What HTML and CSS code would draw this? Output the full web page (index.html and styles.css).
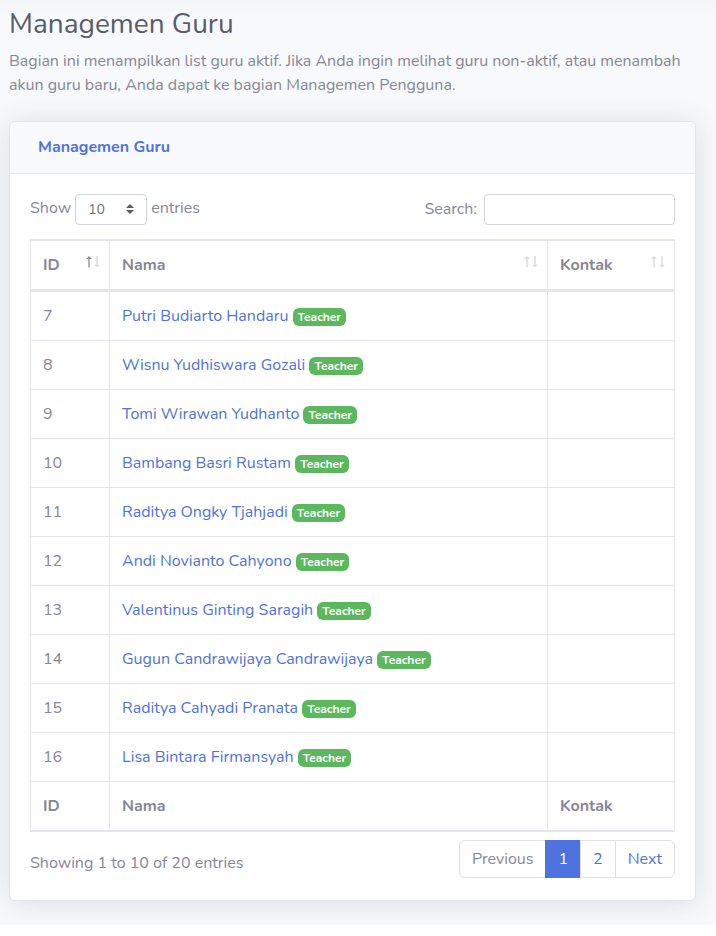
FILE: index.html
```html
<!DOCTYPE html>
<html lang="id">
<head>
<meta charset="utf-8">
<meta name="viewport" content="width=device-width, initial-scale=1">
<title>Managemen Guru</title>
<link rel="stylesheet" href="styles.css">
</head>
<body>
<main class="content">
  <h1 class="page-title">Managemen Guru</h1>
  <p class="intro">Bagian ini menampilkan list guru aktif. Jika Anda ingin melihat guru non-aktif, atau menambah akun guru baru, Anda dapat ke bagian Managemen Pengguna.</p>
  <section class="card">
    <header class="card-header"><h2 class="card-title">Managemen Guru</h2></header>
    <div class="card-body">
      <div class="toolbar">
        <div class="length">
          <label for="length">Show</label>
          <span class="select-wrap">
            <select id="length" class="control select"><option>10</option><option>25</option><option>50</option><option>100</option></select>
            <svg class="caret" viewBox="0 0 8 10" aria-hidden="true"><path d="M4 0 0 4h8zM4 10 0 6h8z"/></svg>
          </span>
          <span>entries</span>
        </div>
        <div class="search">
          <label for="search">Search:</label>
          <input id="search" type="search" class="control search-input">
        </div>
      </div>
      <table class="table">
        <colgroup><col class="col-id"><col><col class="col-kontak"></colgroup>
        <thead>
          <tr>
            <th><div class="sort asc">ID<svg class="arrows" viewBox="0 0 14 12" aria-hidden="true"><path class="up" d="M3 0 6 3H3.700V11.500H2.300V3H0z"/><path class="down" d="M11 11.500 8 8.800h2.300V0h1.400v8.800H14z"/></svg></div></th>
            <th><div class="sort">Nama<svg class="arrows" viewBox="0 0 14 12" aria-hidden="true"><path class="up" d="M3 0 6 3H3.700V11.500H2.300V3H0z"/><path class="down" d="M11 11.500 8 8.800h2.300V0h1.400v8.800H14z"/></svg></div></th>
            <th><div class="sort">Kontak<svg class="arrows" viewBox="0 0 14 12" aria-hidden="true"><path class="up" d="M3 0 6 3H3.700V11.500H2.300V3H0z"/><path class="down" d="M11 11.500 8 8.800h2.300V0h1.400v8.800H14z"/></svg></div></th>
          </tr>
        </thead>
        <tbody>
          <tr><td>7</td><td><a href="#">Putri Budiarto Handaru</a> <span class="badge">Teacher</span></td><td></td></tr>
          <tr><td>8</td><td><a href="#">Wisnu Yudhiswara Gozali</a> <span class="badge">Teacher</span></td><td></td></tr>
          <tr><td>9</td><td><a href="#">Tomi Wirawan Yudhanto</a> <span class="badge">Teacher</span></td><td></td></tr>
          <tr><td>10</td><td><a href="#">Bambang Basri Rustam</a> <span class="badge">Teacher</span></td><td></td></tr>
          <tr><td>11</td><td><a href="#">Raditya Ongky Tjahjadi</a> <span class="badge">Teacher</span></td><td></td></tr>
          <tr><td>12</td><td><a href="#">Andi Novianto Cahyono</a> <span class="badge">Teacher</span></td><td></td></tr>
          <tr><td>13</td><td><a href="#">Valentinus Ginting Saragih</a> <span class="badge">Teacher</span></td><td></td></tr>
          <tr><td>14</td><td><a href="#">Gugun Candrawijaya Candrawijaya</a> <span class="badge">Teacher</span></td><td></td></tr>
          <tr><td>15</td><td><a href="#">Raditya Cahyadi Pranata</a> <span class="badge">Teacher</span></td><td></td></tr>
          <tr><td>16</td><td><a href="#">Lisa Bintara Firmansyah</a> <span class="badge">Teacher</span></td><td></td></tr>
        </tbody>
        <tfoot><tr><th>ID</th><th>Nama</th><th>Kontak</th></tr></tfoot>
      </table>
      <div class="table-footer">
        <div class="info">Showing 1 to 10 of 20 entries</div>
        <nav class="pagination" aria-label="Pagination">
          <a class="page disabled" aria-disabled="true">Previous</a>
          <a class="page active" href="#" aria-current="page">1</a>
          <a class="page" href="#">2</a>
          <a class="page" href="#">Next</a>
        </nav>
      </div>
    </div>
  </section>
</main>
</body>
</html>
```
FILE: styles.css
```css
*, *::before, *::after { box-sizing: border-box; }

body {
  margin: 0;
  background: #fff;
  color: #858796;
  font: 400 16px/24px Nunito, Lato, "Open Sans", sans-serif;
}

a { color: #4e73df; text-decoration: none; }

.content {
  padding: 7px 20px 24px 9px;
  background: linear-gradient(#f3f4f7, #f8f9fc 14px);
  overflow: hidden;
}

.page-title {
  margin: 0 0 8px;
  color: #5a5c69;
  font-size: 28px;
  font-weight: 400;
  line-height: 34px;
}

.intro { margin: 0 0 24px; }

.card {
  border: 1px solid #e3e6f0;
  border-radius: 6px;
  background: #fff;
  box-shadow: 0 2px 28px rgba(58, 59, 69, .15);
}

.card-header {
  padding: 13px 28px 14px;
  border-bottom: 1px solid #e3e6f0;
  border-radius: 5px 5px 0 0;
  background: #f8f9fc;
}

.card-title {
  margin: 0;
  color: #4e73df;
  font-size: 16px;
  font-weight: 700;
  line-height: 24px;
}

.card-body { padding: 20px 20px 22px; }

.toolbar {
  display: flex;
  align-items: flex-start;
  justify-content: space-between;
  margin-bottom: 14px;
}

.length { display: flex; align-items: flex-start; gap: 4px; line-height: 28px; }
.search { display: flex; align-items: flex-start; gap: 7px; line-height: 30px; }

.control {
  display: block;
  height: 31px;
  border: 1px solid #d1d3e2;
  border-radius: 4px;
  background: #fff;
  color: #6e707e;
  font: inherit;
  font-size: 14px;
}

.select-wrap { position: relative; }

.select {
  width: 72px;
  padding: 0 24px 0 12px;
  appearance: none;
}

.caret {
  position: absolute;
  top: 10px;
  right: 13px;
  width: 8px;
  height: 10px;
  fill: #5a5c69;
  pointer-events: none;
}

.search-input { width: 191px; padding: 4px 8px; }

.table {
  width: 100%;
  border: solid #e3e6f0;
  border-width: 1px 0;
  border-collapse: separate;
  border-spacing: 0;
  table-layout: fixed;
}

.col-id { width: 80px; }
.col-kontak { width: 127px; }

.table th,
.table td {
  height: 49px;
  padding: 12px;
  border: solid #e3e6f0;
  border-width: 1px 1px 0 0;
  text-align: left;
}

.table th:first-child,
.table td:first-child { border-left-width: 1px; }
.table thead th { border-bottom-width: 2px; }
.table tfoot th { border-bottom-width: 1px; }

.sort {
  display: flex;
  justify-content: space-between;
  margin-right: -3px;
}

.arrows {
  width: 14px;
  height: 12px;
  margin-top: 3px;
  fill: #dadbe0;
}

.asc .up { fill: #92949f; }

.badge {
  display: inline-block;
  padding: 3px 5px;
  border-radius: 6px;
  background: #5cb85c;
  color: #fff;
  font-size: 12px;
  font-weight: 700;
  line-height: 12px;
  vertical-align: baseline;
}

.table-footer {
  display: flex;
  align-items: flex-end;
  justify-content: space-between;
  padding-top: 8px;
}

.info { padding-bottom: 3px; }

.pagination { display: flex; }

.page {
  margin-left: -1px;
  padding: 6px 12px;
  border: 1px solid #dddfeb;
  background: #fff;
}

.page:first-child { margin-left: 0; border-radius: 6px 0 0 6px; }
.page:last-child { border-radius: 0 6px 6px 0; }
.disabled { color: #858796; }
.active { border-color: #4e73df; background: #4e73df; color: #fff; }
```
